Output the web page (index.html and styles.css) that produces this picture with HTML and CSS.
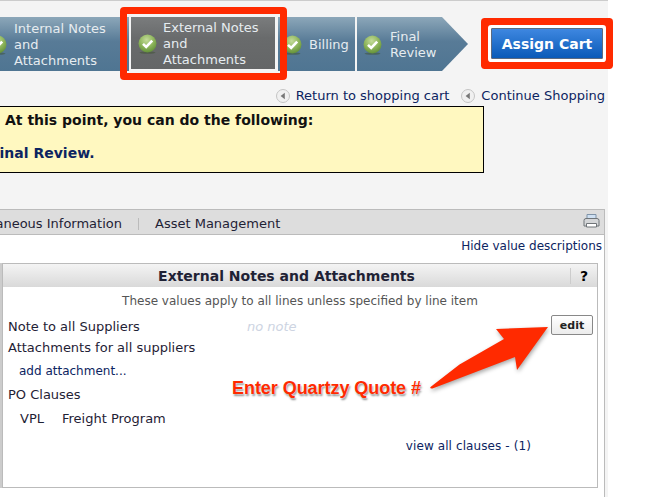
FILE: index.html
```html
<!DOCTYPE html>
<html lang="en">
<head>
    <meta charset="UTF-8">
    <meta name="viewport" content="width=device-width, initial-scale=1.0">
    <title>External Notes and Attachments</title>
    <link rel="stylesheet" href="styles.css">
</head>
<body>
    <svg class="defs" width="0" height="0">
        <defs>
            <radialGradient id="ball" cx="45%" cy="30%" r="75%">
                <stop offset="0" stop-color="#c4dc9a"/>
                <stop offset="0.55" stop-color="#8cb45a"/>
                <stop offset="1" stop-color="#5c8a34"/>
            </radialGradient>
            <symbol id="check" viewBox="0 0 19 20">
                <ellipse cx="9.5" cy="18.6" rx="8" ry="1.2" fill="#3d5030" opacity="0.5"/>
                <circle cx="9.5" cy="9.5" r="9" fill="url(#ball)"/>
                <path d="M5 9.8l3.2 3.2 6-6.4" fill="none" stroke="#fff" stroke-width="2.6"/>
            </symbol>
            <symbol id="back" viewBox="0 0 14 14">
                <circle cx="7" cy="7" r="6.5" fill="#f0f0f0" stroke="#c4c4c4"/>
                <path d="M8.8 3.8v6.4L4.6 7z" fill="#777"/>
            </symbol>
        </defs>
    </svg>

    <div class="page">
        <div class="top-bar">
            <div class="steps">
                <div class="step step-internal">
                    <svg class="check"><use href="#check"/></svg>
                    <span>Internal Notes<br>and<br>Attachments</span>
                </div>
                <div class="step step-active">
                    <svg class="check"><use href="#check"/></svg>
                    <span>External Notes<br>and<br>Attachments</span>
                </div>
                <div class="step step-billing">
                    <svg class="check"><use href="#check"/></svg>
                    <span>Billing</span>
                </div>
                <div class="step step-final">
                    <svg class="check"><use href="#check"/></svg>
                    <span>Final<br>Review</span>
                </div>
            </div>
            <button class="assign">Assign Cart</button>
        </div>

        <div class="back-links">
            <a class="back-link"><svg class="back"><use href="#back"/></svg>Return to shopping cart</a>
            <a class="back-link"><svg class="back"><use href="#back"/></svg>Continue Shopping</a>
        </div>

        <div class="notice">
            <div class="notice-head">At this point, you can do the following:</div>
            <div class="notice-link">Final Review.</div>
        </div>

        <div class="panel">
            <div class="tabs">
                <div class="tab-first"><span>Miscellaneous Information</span></div>
                <div class="tab-sep"></div>
                <div class="tab">Asset Management</div>
                <svg class="printer" viewBox="0 0 17 15">
                    <path d="M4 6V1.500h9V6z" fill="#cfe0f2" stroke="#7f93a8"/>
                    <path d="M1 13V7.500Q1 5.500 3 5.500h11q2 0 2 2V13z" fill="#d4d6d8" stroke="#6f7478"/>
                    <path d="M3.500 10.500h10v3.500h-10z" fill="#fff" stroke="#6f7478"/>
                </svg>
            </div>
            <div class="hide-row"><a>Hide value descriptions</a></div>

            <div class="box">
                <div class="box-head">
                    <div class="box-title">External Notes and Attachments</div>
                    <div class="box-help">?</div>
                </div>
                <div class="box-desc">These values apply to all lines unless specified by line item</div>
                <div class="row-note">
                    <div class="note-label">Note to all Suppliers</div>
                    <div class="note-empty">no note</div>
                    <button class="edit">edit</button>
                </div>
                <div class="row-attach">Attachments for all suppliers</div>
                <a class="row-add">add attachment...</a>
                <div class="row-po">PO Clauses</div>
                <div class="row-clause"><span>VPL</span><span>Freight Program</span></div>
                <a class="row-all">view all clauses - (1)</a>
            </div>
        </div>

        <svg class="callout-arrow" viewBox="0 0 130 75">
            <path d="M118 1L66 3l8 10-44.500 25.500L0.500 61q-1 2 2 1.500L85 31l2 13z" fill="#ff2a00"/>
        </svg>
        <div class="callout-text">Enter Quartzy Quote #</div>
    </div>
</body>
</html>
```

FILE: styles.css
```css
html, body {
    margin: 0;
    padding: 0;
    height: 100%;
    overflow: hidden;
    background-color: white;
}

body {
    font-family: "DejaVu Sans", sans-serif;
    font-size: 13px;
    line-height: 16px;
    color: #1f2235;
}

a {
    color: #0c2461;
}

.defs {
    position: absolute;
}

.page {
    position: relative;
    width: 608px;
    height: 497px;
    background-color: #f4f4f4;
    border-top: 1px solid #ccc;
    box-sizing: border-box;
}

.top-bar {
    display: flex;
    align-items: flex-start;
    padding-top: 16px;
    height: 54px;
}

.steps {
    display: flex;
    flex: none;
    margin-left: -12px;
    width: 480px;
    height: 54px;
}

.step {
    display: flex;
    align-items: center;
    flex: none;
    box-sizing: border-box;
    height: 54px;
    padding-top: 1px;
    color: #e6ecf0;
    background: linear-gradient(#8ca7b9, #587b97 45%, #4f7592);
}

.check {
    flex: none;
    width: 19px;
    height: 20px;
}

.step-internal {
    width: 141px;
    margin-right: -9px;
    gap: 7px;
}

.step-active {
    position: relative;
    width: 148px;
    margin-left: 9px;
    padding-left: 7px;
    gap: 6px;
    background: linear-gradient(#7a7c7d, #696b6c 40%, #646667);
    border-left: 2px solid #f4f4f4;
    border-right: 2px solid #f4f4f4;
    border-bottom: 2px solid #f4f4f4;
    z-index: 1;
}

.step-active::after {
    content: "";
    position: absolute;
    left: -11px;
    right: -12px;
    top: -10px;
    bottom: -11px;
    border: 7px solid #ff2a00;
    border-radius: 4px;
}

.step-billing {
    width: 77px;
    margin-left: 1px;
    padding-left: 5px;
    gap: 7px;
}

.step-final {
    width: 111px;
    margin-left: 2px;
    padding-left: 6px;
    gap: 8px;
    clip-path: polygon(0 0, 85px 0, 111px 27px, 85px 54px, 0 54px);
}

.assign {
    flex: none;
    width: 112px;
    height: 31px;
    margin: 11px 0 0 23px;
    padding: 0;
    font-family: "DejaVu Sans", sans-serif;
    font-size: 14px;
    font-weight: bold;
    color: white;
    background: linear-gradient(#3e87e0, #0a5ab8);
    border: 1px solid #5c6a80;
    box-shadow: 0 0 0 3px white, 0 0 0 10px #ff2a00;
    border-radius: 1px;
}

.back-links {
    display: flex;
    justify-content: flex-end;
    gap: 12px;
    height: 16px;
    margin-top: 17px;
    padding-right: 3px;
}

.back-link {
    display: flex;
    align-items: center;
    gap: 6px;
}

.back {
    width: 14px;
    height: 14px;
}

.notice {
    box-sizing: border-box;
    width: 484px;
    height: 67px;
    margin-top: 2px;
    padding: 5px 0 0 5px;
    font-size: 14px;
    font-weight: bold;
    background-color: #fff8c0;
    border: 1px solid black;
    border-left: none;
    color: #111;
}

.notice-link {
    margin-top: 17px;
    margin-left: -15px;
    color: #0c2461;
}

.panel {
    height: 288px;
    margin-top: 36px;
    width: 605px;
    box-sizing: border-box;
    background-color: white;
    border-right: 1px solid #bbb;
}

.tabs {
    display: flex;
    align-items: center;
    box-sizing: border-box;
    height: 26px;
    padding-top: 4px;
    background-color: #ddd;
    border-top: 1px solid #bbb;
    border-bottom: 1px solid #bbb;
}

.tab-first {
    display: flex;
    justify-content: flex-end;
    width: 122px;
    white-space: nowrap;
}

.tab-sep {
    width: 1px;
    height: 12px;
    margin: 0 16px;
    background-color: #bbb;
}

.printer {
    width: 17px;
    height: 15px;
    margin-left: auto;
    margin-right: 4px;
    margin-top: -8px;
}

.hide-row {
    height: 16px;
    margin-top: 3px;
    padding-right: 2px;
    font-size: 12px;
    text-align: right;
}

.box {
    box-sizing: border-box;
    width: 596px;
    height: 225px;
    margin: 9px 0 0 2px;
    border: 1px solid #bbb;
    box-shadow: -2px 0 0 #ccc;
}

.box-head {
    display: flex;
    align-items: center;
    height: 23px;
    background: linear-gradient(#f4f4f4, #d9d9d9);
    font-size: 14px;
    font-weight: bold;
}

.box-title {
    flex: 1;
    text-align: center;
}

.box-help {
    width: 26px;
    height: 16px;
    border-left: 1px solid #ccc;
    text-align: center;
    color: black;
}

.box-desc {
    margin-top: 6px;
    font-size: 12px;
    text-align: center;
    color: #555;
}

.row-note {
    display: flex;
    align-items: center;
    height: 20px;
    margin-top: 6px;
    padding: 0 4px 0 5px;
}

.note-label {
    width: 239px;
    padding-top: 3px;
}

.note-empty {
    flex: 1;
    padding-top: 3px;
    font-style: italic;
    color: #cdd4e2;
}

.edit {
    width: 42px;
    height: 20px;
    padding: 0;
    font-family: "DejaVu Sans", sans-serif;
    font-size: 11px;
    font-weight: bold;
    color: #222;
    background: linear-gradient(white, #ececec);
    border: 1px solid #888;
    border-radius: 2px;
}

.row-attach {
    margin-top: 5px;
    padding-left: 5px;
}

.row-add {
    display: block;
    margin-top: 7px;
    padding-left: 16px;
    font-size: 12px;
}

.row-po {
    margin-top: 8px;
    padding-left: 5px;
}

.row-clause {
    display: flex;
    gap: 18px;
    margin-top: 8px;
    padding-left: 17px;
}

.row-all {
    display: block;
    margin-top: 11px;
    padding-right: 66px;
    font-size: 12px;
    letter-spacing: 0.1px;
    text-align: right;
}

/* annotation drawn on top of the screenshot */
.callout-arrow {
    position: absolute;
    left: 430px;
    top: 325px;
    width: 130px;
    height: 75px;
    filter: drop-shadow(1px 2px 2px rgba(0, 0, 0, 0.35));
}

.callout-text {
    position: absolute;
    left: 232px;
    top: 376px;
    font-family: "Liberation Sans", Arial, sans-serif;
    font-size: 18px;
    line-height: 22px;
    letter-spacing: -0.05px;
    font-weight: bold;
    color: #ff2a00;
    white-space: nowrap;
    text-shadow: 0 0 2px white, 1px 2px 2px rgba(0, 0, 0, 0.45);
}
```
